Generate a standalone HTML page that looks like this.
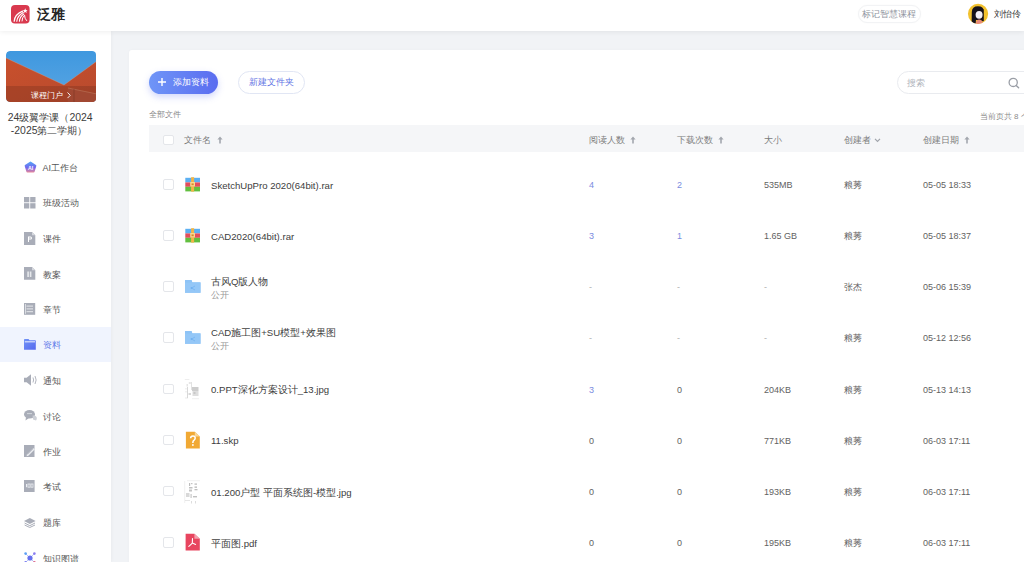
<!DOCTYPE html>
<html><head><meta charset="utf-8">
<style>
*{margin:0;padding:0;box-sizing:border-box}
html,body{width:1024px;height:562px;overflow:hidden;background:#f1f3f6;font-family:"Liberation Sans",sans-serif;color:#333}
.abs{position:absolute}
.t{position:absolute;white-space:nowrap;line-height:1}
#hdr{position:absolute;left:0;top:0;width:1024px;height:31px;background:#fff;box-shadow:0 1px 5px rgba(0,0,0,.07);z-index:3}
#side{position:absolute;left:0;top:31px;width:111px;height:531px;background:#fff;z-index:2;box-shadow:1px 0 3px rgba(0,0,0,.03)}
#card{position:absolute;left:129px;top:49.5px;width:900px;height:520px;background:#fff;border-radius:3px;box-shadow:0 0 3px rgba(0,0,0,.03)}
.cb{position:absolute;width:10.5px;height:10.5px;border:1px solid #e4e6ea;border-radius:2px;background:#fff}
.nm{font-size:9.6px;color:#404040}
.sub{font-size:9px;color:#9a9a9a}
.cell{font-size:9px}
.hd{color:#7c7c7c}
svg{display:block}

</style></head><body>
<div id="hdr"><svg width="19" height="19" viewBox="0 0 19 19" style="position:absolute;left:11px;top:5px">
<rect x="0" y="0" width="18.6" height="18.4" rx="4" fill="#d9394e"/>
<g fill="none" stroke="#fff" stroke-linecap="round">
<path d="M3.2 16.2 Q3.8 9.5 11.5 6.2" stroke-width="1.3"/>
<path d="M5.8 16.2 Q6.3 11 12.2 7.6" stroke-width="1.2"/>
<path d="M8.4 16.2 Q8.6 12 12.8 9" stroke-width="1.1"/>
<path d="M11 16 Q11 12.5 13.6 10.2 Q13.5 13.5 15.6 15.6" stroke-width="1"/>
</g>
<path d="M14.2 3.2 L14.9 5 L16.6 5.2 L15.3 6.3 L15.8 8 L14.2 7.1 L12.6 8 L13.1 6.3 L11.8 5.2 L13.5 5 Z" fill="#fff"/>
</svg>
  <div class="t" style="left:36.5px;top:7.3px;font-size:14px;font-weight:bold;color:#262626">泛雅</div>
  <div class="abs" style="left:857.5px;top:4.5px;width:63.5px;height:18px;border-radius:9px;border:1px solid #f2f3f5;background:#fff;box-shadow:0 0 2px rgba(0,0,0,.03)"></div>
  <div class="t" style="left:862px;top:9.8px;font-size:9px;color:#8e939d">标记智慧课程</div>
  <svg width="22" height="22" viewBox="0 0 22 22" style="position:absolute;left:966.8px;top:2.8px">
<clipPath id="av"><circle cx="11.05" cy="10.8" r="10.1"/></clipPath>
<circle cx="11.05" cy="10.8" r="10.1" fill="#f2c12e"/>
<g clip-path="url(#av)">
<path d="M4.6 21 L4.8 9 Q5 3.2 11 3.2 Q16.6 3.2 16.8 8.5 L16.8 18 Q15 19 14 17 L9 17 L8.5 22 Z" fill="#16121a"/>
<ellipse cx="12.1" cy="11.8" rx="3.5" ry="3.9" fill="#f3eff6"/>
<path d="M7.5 10.5 Q9 6.8 13 6.5 Q15.5 6.8 16.5 8.5 L16.5 6 Q14 4 10.5 4.5 Q7 5.5 7 10 Z" fill="#16121a"/>
<path d="M8.6 22 Q9 16.8 12.2 16.6 Q15.6 16.8 16 22 Z" fill="#e98a7c"/>
</g>
</svg>
  <div class="t" style="left:994px;top:9.6px;font-size:9px;color:#3a3a3a">刘怡伶</div>
</div>
<div id="side">
<svg width="90.5" height="51" viewBox="0 0 90.5 51" style="position:absolute;left:5.5px;top:20px;border-radius:4px">
<defs><clipPath id="ci"><rect x="0" y="0" width="91" height="51" rx="4"/></clipPath>
<linearGradient id="sky" x1="0" y1="0" x2="0" y2="1"><stop offset="0" stop-color="#3f98df"/><stop offset="1" stop-color="#5aa6e3"/></linearGradient>
<linearGradient id="wl" x1="0" y1="0" x2="1" y2="1"><stop offset="0" stop-color="#c8502c"/><stop offset="1" stop-color="#b84a2e"/></linearGradient></defs>
<g clip-path="url(#ci)">
<rect x="0" y="0" width="91" height="51" fill="url(#sky)"/>
<path d="M0 7 L58 34 L91 10 L91 51 L0 51 Z" fill="url(#wl)"/>
<path d="M0 7 L58 34 L91 10" fill="none" stroke="#e0a080" stroke-width="0.6" opacity="0.6"/>
<path d="M62 37 L91 43 L91 51 L62 51 Z" fill="#b9533a"/>
<path d="M62 37 L91 43" stroke="#d98a6a" stroke-width="0.6"/>
<path d="M68 38 L68 51" stroke="#8f3c2a" stroke-width="0.6"/>
<rect x="0" y="35" width="91" height="16" fill="#000" opacity="0.13"/>
</g>
</svg>
<div class="t" style="left:31px;top:60.5px;font-size:7.6px;color:#fff">课程门户</div>
<svg width="6" height="8" viewBox="0 0 6 8" style="position:absolute;left:65.5px;top:59.5px"><path d="M1.5 1.5 L4.3 4.3 L1.5 7.1" fill="none" stroke="#fff" stroke-width="0.9"/></svg>

<div class="t" style="left:7.8px;top:81.2px;font-size:10.45px;color:#3d3d3d;line-height:12px">24级翼学课（2024</div>
<div class="t" style="left:10.8px;top:94px;font-size:10.45px;color:#3d3d3d;line-height:12px">-2025第二学期）</div>
<div class="abs" style="left:24px;top:130.0px"><svg width="13" height="13" viewBox="0 0 13 13"><defs><linearGradient id="aig" x1="0" y1="0" x2="0" y2="1"><stop offset="0" stop-color="#52a8f6"/><stop offset="0.55" stop-color="#7466ee"/><stop offset="1" stop-color="#e6889a"/></linearGradient></defs>
<path d="M6.5 0.6 Q7 0.6 7.4 0.9 L12 4 Q12.5 4.4 12.3 5 L10.6 10.8 Q10.4 11.5 9.7 11.5 L3.3 11.5 Q2.6 11.5 2.4 10.8 L0.7 5 Q0.5 4.4 1 4 L5.6 0.9 Q6 0.6 6.5 0.6 Z" fill="url(#aig)"/>
<text x="6.5" y="8.6" font-size="5.2" font-weight="bold" text-anchor="middle" fill="#fff" font-family="Liberation Sans">AI</text></svg></div>
<div class="t" style="left:42.5px;top:133.2px;font-size:9px;color:#555">AI工作台</div>
<div class="abs" style="left:23.7px;top:165.6px"><svg width="12" height="12" viewBox="0 0 12 12"><rect x="0" y="0" width="5.3" height="5.3" fill="#a9adb8"/><rect x="6.2" y="0" width="5.3" height="5.3" fill="#a9adb8"/><rect x="0" y="6.2" width="5.3" height="5.3" fill="#a9adb8"/><rect x="6.2" y="6.2" width="5.3" height="5.3" fill="#a9adb8"/></svg></div>
<div class="t" style="left:42.5px;top:168.2px;font-size:9px;color:#555">班级活动</div>
<div class="abs" style="left:23.7px;top:200.7px"><svg width="12" height="13" viewBox="0 0 12 13"><path d="M0 0 H8 L11.3 3.3 V13 H0 Z" fill="#a9adb8"/><path d="M8 0 V3.3 H11.3 Z" fill="#d5d8de"/><path d="M4 4.5 H6.6 Q8 4.5 8 6 Q8 7.5 6.6 7.5 H5 V10 H4 Z M5 5.4 V6.6 H6.5 Q7 6.6 7 6 Q7 5.4 6.5 5.4 Z" fill="#fff"/></svg></div>
<div class="t" style="left:42.5px;top:203.7px;font-size:9px;color:#555">课件</div>
<div class="abs" style="left:24px;top:235.8px"><svg width="12" height="13" viewBox="0 0 12 13"><path d="M0 0 H8 L11.3 3.3 V12.8 H0 Z" fill="#a9adb8"/><path d="M8 0 V3.3 H11.3 Z" fill="#d5d8de"/><rect x="3.3" y="4.5" width="1.6" height="5.5" fill="#e6e8ec"/><rect x="5.8" y="4.5" width="1.6" height="5.5" fill="#e6e8ec"/></svg></div>
<div class="t" style="left:42.5px;top:240.0px;font-size:9px;color:#555">教案</div>
<div class="abs" style="left:24px;top:272.0px"><svg width="12" height="12" viewBox="0 0 12 12"><rect x="0" y="0" width="11.2" height="11.8" fill="#a9adb8"/><rect x="2.5" y="2.6" width="6.5" height="1" fill="#e6e8ec"/><rect x="2.5" y="5.4" width="6.5" height="1" fill="#e6e8ec"/><rect x="2.5" y="8.2" width="6.5" height="1" fill="#e6e8ec"/><rect x="1" y="1" width="0.9" height="9.8" fill="#e0e2e7"/></svg></div>
<div class="t" style="left:42.5px;top:275.2px;font-size:9px;color:#555">章节</div>
<div class="abs" style="left:0;top:296px;width:111px;height:35px;background:#f0f4fe"></div>
<div class="abs" style="left:24.3px;top:307.8px"><svg width="12" height="11" viewBox="0 0 12 11"><defs><linearGradient id="fg" x1="0" y1="0" x2="1" y2="1"><stop offset="0" stop-color="#7193f7"/><stop offset="1" stop-color="#5568ee"/></linearGradient></defs><path d="M0 0.8 Q0 0 0.8 0 H4.5 L5.6 1.2 H11.2 Q11.8 1.2 11.8 1.8 V10.8 H0 Z" fill="url(#fg)"/><rect x="0.8" y="2.4" width="10.2" height="0.9" fill="#fff"/></svg></div>
<div class="t" style="left:42.5px;top:310.2px;font-size:9px;color:#5f7ae8">资料</div>
<div class="abs" style="left:24.3px;top:343.0px"><svg width="14" height="12" viewBox="0 0 14 12"><path d="M0 3.8 H2.6 L7 0.3 V11.7 L2.6 8.2 H0 Z" fill="#a9adb8"/><path d="M9 3.5 Q10.2 6 9 8.5" fill="none" stroke="#a9adb8" stroke-width="0.9"/><path d="M11 2 Q13.3 6 11 10" fill="none" stroke="#a9adb8" stroke-width="0.9"/></svg></div>
<div class="t" style="left:42.5px;top:345.7px;font-size:9px;color:#555">通知</div>
<div class="abs" style="left:24px;top:379.0px"><svg width="13" height="11" viewBox="0 0 13 11"><ellipse cx="5.5" cy="4.3" rx="5.5" ry="4.3" fill="#a9adb8"/><path d="M2 7 L1.5 10.5 L5 8 Z" fill="#a9adb8"/><path d="M8.5 5.5 Q12.5 5 12.8 8 Q12.8 9.5 12 10.5 L9 9.5 Z" fill="#cdd0d7"/><rect x="3" y="3.2" width="5" height="0.9" fill="#d9dce2"/></svg></div>
<div class="t" style="left:42.5px;top:381.7px;font-size:9px;color:#555">讨论</div>
<div class="abs" style="left:24px;top:414.4px"><svg width="11" height="12" viewBox="0 0 11 12"><path d="M0 0 H10.5 V12 H0 Z" fill="#a9adb8"/><path d="M3 9.5 L9.5 3 L10.8 4.3 L4.3 10.8 L2.6 11.2 Z" fill="#eef0f3"/><path d="M3.6 9.5 L9.5 3.6" stroke="#a9adb8" stroke-width="0.6"/></svg></div>
<div class="t" style="left:42.5px;top:417.2px;font-size:9px;color:#555">作业</div>
<div class="abs" style="left:24.2px;top:449.0px"><svg width="11" height="12" viewBox="0 0 11 12"><rect x="0" y="0" width="10.6" height="12" fill="#a9adb8"/><rect x="2" y="4" width="1.1" height="3.2" fill="#eceef2"/><rect x="4" y="4" width="2" height="3.2" fill="none" stroke="#eceef2" stroke-width="0.8"/><rect x="7" y="4" width="2" height="3.2" fill="none" stroke="#eceef2" stroke-width="0.8"/></svg></div>
<div class="t" style="left:42.5px;top:452.4px;font-size:9px;color:#555">考试</div>
<div class="abs" style="left:24.2px;top:486.5px"><svg width="12" height="10" viewBox="0 0 12 10"><path d="M5.8 0 L11.6 3 L5.8 6 L0 3 Z" fill="#a9adb8"/><path d="M0.6 5 L5.8 7.7 L11 5" fill="none" stroke="#a9adb8" stroke-width="1"/><path d="M0.6 7 L5.8 9.5 L11 7" fill="none" stroke="#a9adb8" stroke-width="1"/></svg></div>
<div class="t" style="left:42.5px;top:488.2px;font-size:9px;color:#555">题库</div>
<div class="abs" style="left:24.2px;top:520.8px"><svg width="12" height="12" viewBox="0 0 12 12"><path d="M2 2 L6 6 M10 2 L6 6 M2 10 L6 6 M10 10 L6 6" stroke="#a6b5f5" stroke-width="0.8"/><circle cx="6" cy="6" r="2.6" fill="#6670ee"/><circle cx="1.6" cy="1.6" r="1.3" fill="#5aa0f5"/><circle cx="10.4" cy="1.6" r="1.3" fill="#8a7cf0"/><circle cx="1.6" cy="10.4" r="1.3" fill="#7a7cf0"/><circle cx="10.4" cy="10.4" r="1.3" fill="#e56a8a"/></svg></div>
<div class="t" style="left:42.5px;top:523.6px;font-size:9px;color:#555">知识图谱</div>
</div>
<div id="card"></div>
<div class="abs" style="left:149px;top:70.5px;width:68.5px;height:23px;border-radius:12px;background:linear-gradient(90deg,#6f95f7,#5a6cf0);box-shadow:0 3px 7px rgba(92,112,240,.28)"></div>
<svg width="10" height="10" viewBox="0 0 10 10" style="position:absolute;left:156.5px;top:77px"><path d="M5 1 V9 M1 5 H9" stroke="#fff" stroke-width="1.4"/></svg>
<div class="t" style="left:172.5px;top:77.5px;font-size:9px;color:#fff">添加资料</div>
<div class="abs" style="left:237.5px;top:70.5px;width:67.5px;height:23px;border-radius:12px;border:1px solid #e1e6f4;background:#fff"></div>
<div class="t" style="left:249px;top:77.5px;font-size:9px;color:#5f74e4">新建文件夹</div>
<div class="abs" style="left:897px;top:71px;width:140px;height:23px;border-radius:12px;border:1px solid #e9ebef;background:#fff"></div>
<div class="t" style="left:906.5px;top:78.5px;font-size:9px;color:#b0b4bc">搜索</div>
<svg width="12" height="12" viewBox="0 0 12 12" style="position:absolute;left:1008px;top:76.5px"><circle cx="5.2" cy="5.4" r="4.1" fill="none" stroke="#9a9ea6" stroke-width="1.3"/><path d="M8.2 8.4 L10.6 10.8" stroke="#9a9ea6" stroke-width="1.4" stroke-linecap="round"/></svg>
<div class="t" style="left:149px;top:110.8px;font-size:8px;color:#8a8a8a">全部文件</div>
<div class="t" style="left:979.8px;top:112.8px;font-size:8px;color:#8c8c8c">当前页共 8 个</div>
<div class="abs" style="left:149px;top:125.4px;width:880px;height:26.2px;background:#f5f6f8"></div>
<div class="cb" style="left:163px;top:134.5px"></div>
<div class="t cell hd" style="left:184px;top:136.2px">文件名</div><svg width="6" height="8" viewBox="0 0 6 8" style="position:absolute;left:216.5px;top:136.0px"><path d="M3 0.5 L5.6 3.6 L3.8 3.6 L3.8 7.5 L2.2 7.5 L2.2 3.6 L0.4 3.6 Z" fill="#a3a7ae"/></svg>
<div class="t cell hd" style="left:588.5px;top:136.2px">阅读人数</div><svg width="6" height="8" viewBox="0 0 6 8" style="position:absolute;left:629.5px;top:136.0px"><path d="M3 0.5 L5.6 3.6 L3.8 3.6 L3.8 7.5 L2.2 7.5 L2.2 3.6 L0.4 3.6 Z" fill="#a3a7ae"/></svg>
<div class="t cell hd" style="left:677px;top:136.2px">下载次数</div><svg width="6" height="8" viewBox="0 0 6 8" style="position:absolute;left:717.5px;top:136.0px"><path d="M3 0.5 L5.6 3.6 L3.8 3.6 L3.8 7.5 L2.2 7.5 L2.2 3.6 L0.4 3.6 Z" fill="#a3a7ae"/></svg>
<div class="t cell hd" style="left:764px;top:136.2px">大小</div>
<div class="t cell hd" style="left:843.5px;top:136.2px">创建者</div>
<svg width="7" height="6" viewBox="0 0 7 6" style="position:absolute;left:873.5px;top:137px"><path d="M1 1.8 L3.5 4.3 L6 1.8" fill="none" stroke="#a0a4ab" stroke-width="1.2"/></svg>
<div class="t cell hd" style="left:922.5px;top:136.2px">创建日期</div><svg width="6" height="8" viewBox="0 0 6 8" style="position:absolute;left:963.5px;top:136.0px"><path d="M3 0.5 L5.6 3.6 L3.8 3.6 L3.8 7.5 L2.2 7.5 L2.2 3.6 L0.4 3.6 Z" fill="#a3a7ae"/></svg>
<div class="cb" style="left:163.2px;top:179.0px"></div>
<div class="abs" style="left:185px;top:176.8px"><svg width="16" height="16" viewBox="0 0 16 16"><rect x="0.3" y="0.8" width="14.7" height="4.6" fill="#5cb0f2"/><rect x="0.3" y="5.4" width="14.7" height="4.4" fill="#e24d5d"/><rect x="0.3" y="9.8" width="14.7" height="4.6" fill="#62bf3f"/>
<rect x="6.1" y="0.2" width="3" height="14.4" fill="#f1b546"/><path d="M5.2 5 H10 V9.4 H5.2 Z" fill="#f8d890"/><rect x="6.5" y="6.4" width="2.2" height="1.8" fill="#d68a2a"/></svg></div>
<div class="t nm" style="left:211px;top:180.6px">SketchUpPro 2020(64bit).rar</div>
<div class="t cell" style="left:589px;top:181.0px;color:#7a8ce0">4</div>
<div class="t cell" style="left:677px;top:181.0px;color:#7a8ce0">2</div>
<div class="t cell" style="left:764px;top:181.0px;color:#626262">535MB</div>
<div class="t cell" style="left:844px;top:181.0px;color:#626262">粮莠</div>
<div class="t cell" style="left:923px;top:181.0px;color:#626262">05-05 18:33</div>
<div class="cb" style="left:163.2px;top:230.2px"></div>
<div class="abs" style="left:185px;top:228.0px"><svg width="16" height="16" viewBox="0 0 16 16"><rect x="0.3" y="0.8" width="14.7" height="4.6" fill="#5cb0f2"/><rect x="0.3" y="5.4" width="14.7" height="4.4" fill="#e24d5d"/><rect x="0.3" y="9.8" width="14.7" height="4.6" fill="#62bf3f"/>
<rect x="6.1" y="0.2" width="3" height="14.4" fill="#f1b546"/><path d="M5.2 5 H10 V9.4 H5.2 Z" fill="#f8d890"/><rect x="6.5" y="6.4" width="2.2" height="1.8" fill="#d68a2a"/></svg></div>
<div class="t nm" style="left:211px;top:231.8px">CAD2020(64bit).rar</div>
<div class="t cell" style="left:589px;top:232.2px;color:#7a8ce0">3</div>
<div class="t cell" style="left:677px;top:232.2px;color:#7a8ce0">1</div>
<div class="t cell" style="left:764px;top:232.2px;color:#626262">1.65 GB</div>
<div class="t cell" style="left:844px;top:232.2px;color:#626262">粮莠</div>
<div class="t cell" style="left:923px;top:232.2px;color:#626262">05-05 18:37</div>
<div class="cb" style="left:163.2px;top:281.3px"></div>
<div class="abs" style="left:184.9px;top:280.3px"><svg width="16" height="16" viewBox="0 0 16 16"><path d="M0 0 H6.7 L7.3 2.2 H15.5 V12.8 H0 Z" fill="#8ec3f6"/><path d="M0 2.6 H15.5 V12.8 H0 Z" fill="#94c7f7"/><path d="M6.5 8 L10 6 M6.5 8 L10 10" stroke="#6fb0f0" stroke-width="0.7"/><circle cx="6.5" cy="8" r="0.9" fill="#6fb0f0"/></svg></div>
<div class="t nm" style="left:211px;top:277.0px">古风Q版人物</div>
<div class="t sub" style="left:211px;top:291.1px">公开</div>
<div class="t cell" style="left:589px;top:283.3px;color:#b0b0b0">-</div>
<div class="t cell" style="left:677px;top:283.3px;color:#b0b0b0">-</div>
<div class="t cell" style="left:764px;top:283.3px;color:#b0b0b0">-</div>
<div class="t cell" style="left:844px;top:283.3px;color:#626262">张杰</div>
<div class="t cell" style="left:923px;top:283.3px;color:#626262">05-06 15:39</div>
<div class="cb" style="left:163.2px;top:332.4px"></div>
<div class="abs" style="left:184.9px;top:331.4px"><svg width="16" height="16" viewBox="0 0 16 16"><path d="M0 0 H6.7 L7.3 2.2 H15.5 V12.8 H0 Z" fill="#8ec3f6"/><path d="M0 2.6 H15.5 V12.8 H0 Z" fill="#94c7f7"/><path d="M6.5 8 L10 6 M6.5 8 L10 10" stroke="#6fb0f0" stroke-width="0.7"/><circle cx="6.5" cy="8" r="0.9" fill="#6fb0f0"/></svg></div>
<div class="t nm" style="left:211px;top:328.1px">CAD施工图+SU模型+效果图</div>
<div class="t sub" style="left:211px;top:342.2px">公开</div>
<div class="t cell" style="left:589px;top:334.4px;color:#b0b0b0">-</div>
<div class="t cell" style="left:677px;top:334.4px;color:#b0b0b0">-</div>
<div class="t cell" style="left:764px;top:334.4px;color:#b0b0b0">-</div>
<div class="t cell" style="left:844px;top:334.4px;color:#626262">粮莠</div>
<div class="t cell" style="left:923px;top:334.4px;color:#626262">05-12 12:56</div>
<div class="cb" style="left:163.2px;top:383.6px"></div>
<div class="abs" style="left:183.5px;top:378.8px"><svg width="17" height="21" viewBox="0 0 17 21"><g fill="#d6d6d6">
<rect x="0.8" y="0.2" width="4.5" height="0.8" opacity="0.5"/><rect x="4.8" y="3" width="2" height="2" opacity="0.6"/><rect x="2.5" y="5" width="1.5" height="2.5" opacity="0.6"/>
<rect x="3.2" y="8" width="0.8" height="11" fill="#cfcfcf"/><rect x="1.5" y="9" width="1" height="1.5" opacity="0.6"/><rect x="1.5" y="12" width="1" height="1.5" opacity="0.6"/>
<rect x="4.5" y="14" width="2.5" height="2" fill="#d9d9d9"/><rect x="7" y="3" width="1" height="8" opacity="0.7"/>
<rect x="8" y="8" width="6.5" height="4" fill="#cdcdcd"/><rect x="8.5" y="12" width="6" height="5" fill="#dedede"/><rect x="9.5" y="13" width="2" height="2" fill="#c8c8c8"/>
<rect x="8" y="19.5" width="7" height="0.6" opacity="0.6"/><rect x="1" y="18.5" width="3" height="1" opacity="0.5"/></g></svg></div>
<div class="t nm" style="left:211px;top:385.2px">0.PPT深化方案设计_13.jpg</div>
<div class="t cell" style="left:589px;top:385.6px;color:#7a8ce0">3</div>
<div class="t cell" style="left:677px;top:385.6px;color:#626262">0</div>
<div class="t cell" style="left:764px;top:385.6px;color:#626262">204KB</div>
<div class="t cell" style="left:844px;top:385.6px;color:#626262">粮莠</div>
<div class="t cell" style="left:923px;top:385.6px;color:#626262">05-13 14:13</div>
<div class="cb" style="left:163.2px;top:434.8px"></div>
<div class="abs" style="left:185.2px;top:431.2px"><svg width="16" height="18" viewBox="0 0 16 18"><path d="M0.9 0.8 H9.8 L14.8 5.6 V17.6 H0.9 Z" fill="#f1a934"/><path d="M9.8 0.8 V5.6 H14.8 Z" fill="#f9d79a"/><path d="M5.6 7.2 Q5.6 4.9 7.9 4.9 Q10.2 4.9 10.2 7.1 Q10.2 8.5 8.9 9.3 Q7.9 9.9 7.9 11.2 V12" fill="none" stroke="#fff" stroke-width="1.5"/><circle cx="7.9" cy="14" r="0.9" fill="#fff"/></svg></div>
<div class="t nm" style="left:211px;top:436.4px">11.skp</div>
<div class="t cell" style="left:589px;top:436.8px;color:#626262">0</div>
<div class="t cell" style="left:677px;top:436.8px;color:#626262">0</div>
<div class="t cell" style="left:764px;top:436.8px;color:#626262">771KB</div>
<div class="t cell" style="left:844px;top:436.8px;color:#626262">粮莠</div>
<div class="t cell" style="left:923px;top:436.8px;color:#626262">06-03 17:11</div>
<div class="cb" style="left:163.2px;top:485.9px"></div>
<div class="abs" style="left:183.5px;top:479.9px"><svg width="17" height="25" viewBox="0 0 17 25"><g fill="#cfcfcf">
<rect x="0.5" y="1" width="0.6" height="22" opacity="0.5"/><rect x="3" y="0.5" width="13" height="0.6" opacity="0.5"/>
<rect x="5" y="3" width="1.2" height="3" fill="#bdbdbd"/><rect x="7" y="3" width="1.5" height="1.2" fill="#c4c4c4"/><rect x="10.5" y="3.5" width="2.5" height="1.2" fill="#b8b8b8"/>
<rect x="5" y="7" width="3.5" height="1.5" fill="#c0c0c0"/><rect x="10.5" y="6.5" width="2.5" height="1.3" fill="#b8b8b8"/><rect x="5" y="9.5" width="3" height="2" fill="#c4c4c4"/><rect x="10.5" y="9" width="3" height="1.3" fill="#bdbdbd"/>
<rect x="2" y="13" width="3.5" height="4" fill="#d8d8d8"/><rect x="6.5" y="14" width="1.2" height="4" fill="#c8c8c8"/><rect x="9" y="16" width="4" height="1.4" fill="#c0c0c0"/>
<rect x="1" y="20" width="5" height="0.7" opacity="0.7"/><rect x="7" y="21" width="1" height="2.5" opacity="0.7"/><rect x="11" y="21" width="1" height="2.5" opacity="0.7"/></g></svg></div>
<div class="t nm" style="left:211px;top:487.5px">01.200户型 平面系统图-模型.jpg</div>
<div class="t cell" style="left:589px;top:487.9px;color:#626262">0</div>
<div class="t cell" style="left:677px;top:487.9px;color:#626262">0</div>
<div class="t cell" style="left:764px;top:487.9px;color:#626262">193KB</div>
<div class="t cell" style="left:844px;top:487.9px;color:#626262">粮莠</div>
<div class="t cell" style="left:923px;top:487.9px;color:#626262">06-03 17:11</div>
<div class="cb" style="left:163.2px;top:537.0px"></div>
<div class="abs" style="left:185.2px;top:533.4px"><svg width="16" height="18" viewBox="0 0 16 18"><path d="M0.6 0.8 H9.4 L14.8 5.8 V17.6 H0.6 Z" fill="#e8455f"/><path d="M9.4 0.8 V5.8 H14.8 Z" fill="#f4a0ad"/><path d="M7.5 5.5 Q7.4 8.5 7.3 10 M7.4 10 L10.6 11.4 M7.3 10.1 Q5.5 12 3.8 13.4" fill="none" stroke="#fff" stroke-width="1.1" stroke-linecap="round"/></svg></div>
<div class="t nm" style="left:211px;top:538.6px">平面图.pdf</div>
<div class="t cell" style="left:589px;top:539.0px;color:#626262">0</div>
<div class="t cell" style="left:677px;top:539.0px;color:#626262">0</div>
<div class="t cell" style="left:764px;top:539.0px;color:#626262">195KB</div>
<div class="t cell" style="left:844px;top:539.0px;color:#626262">粮莠</div>
<div class="t cell" style="left:923px;top:539.0px;color:#626262">06-03 17:11</div>
</body></html>
